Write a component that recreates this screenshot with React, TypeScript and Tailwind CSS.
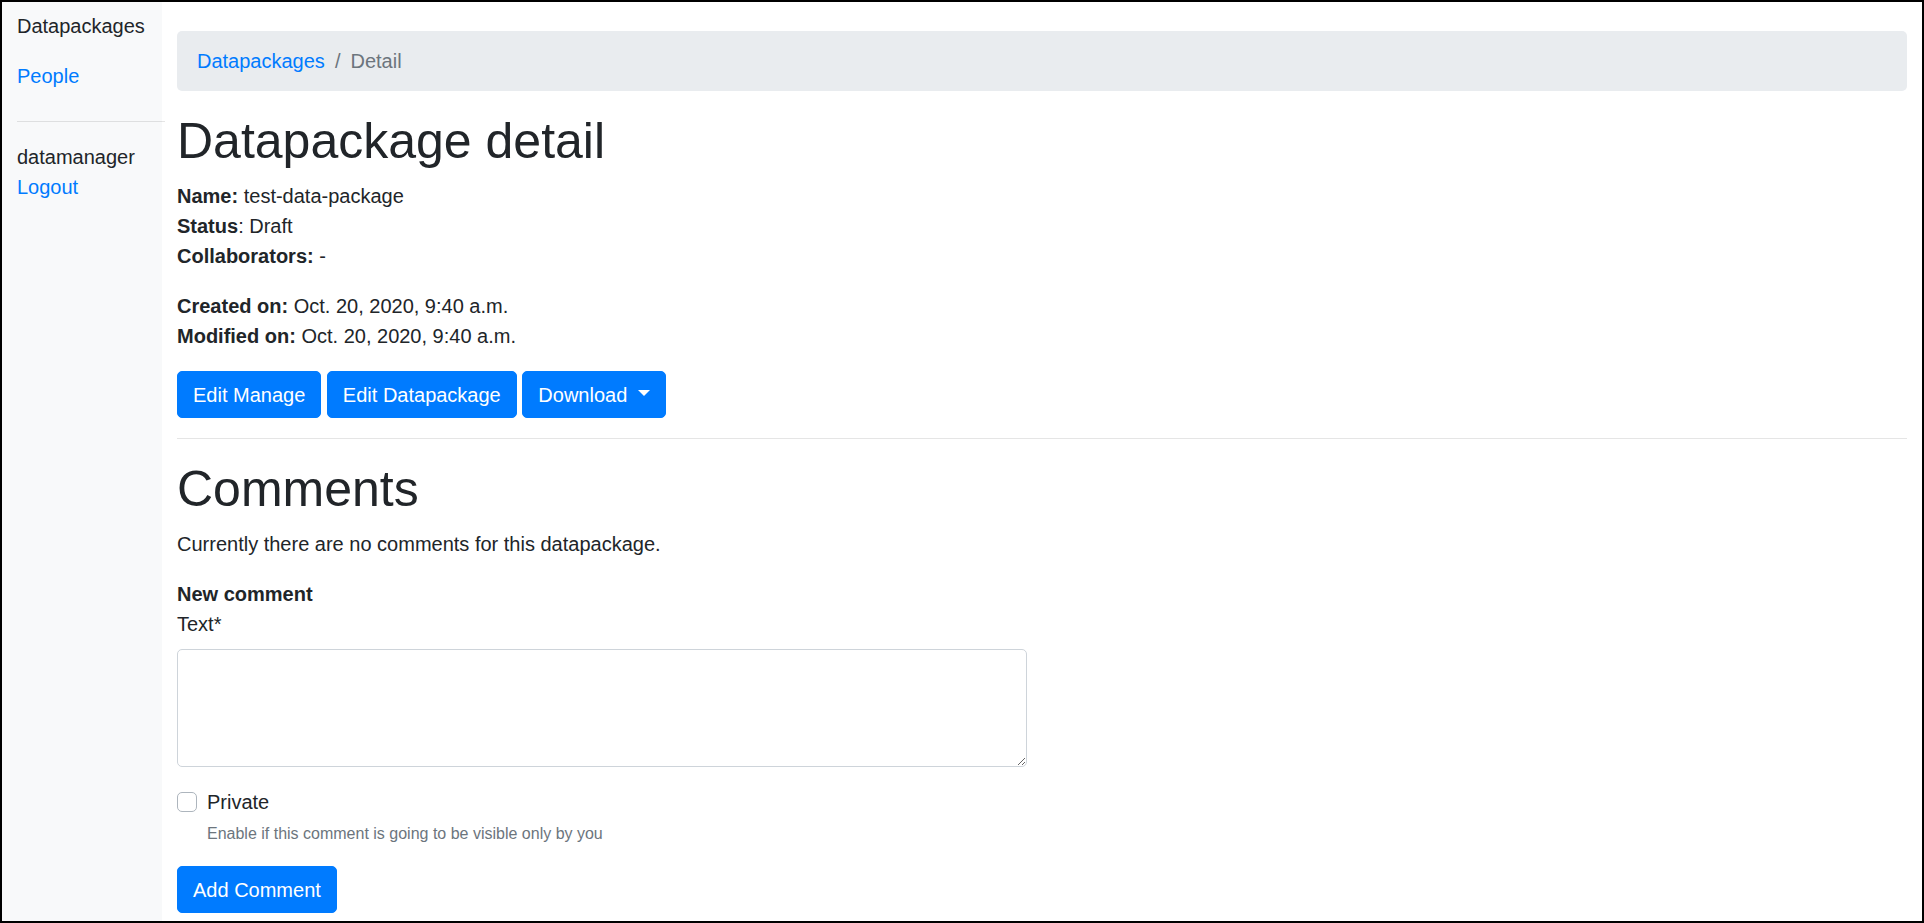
export default function App() {
  return (
    <div className="flex h-[923px] w-[1924px] overflow-hidden border-2 border-black bg-white text-[20px] leading-[30px] text-[#212529] font-['Liberation_Sans',Arial,sans-serif]">
      <aside className="w-[160px] shrink-0 bg-[#f8f9fa] pl-[15px]">
        <a className="block pt-[9px] pb-[10px] text-[#212529]">Datapackages</a>
        <a className="block pt-[10px] pb-[11px] text-[#007bff]">People</a>
        <hr className="mt-[19px] mb-[20px] w-[148px] border-0 border-t border-t-[rgba(0,0,0,0.1)]" />
        <div>datamanager</div>
        <a className="block text-[#007bff]">Logout</a>
      </aside>
      <main className="flex-1 px-[15px] pt-[29px]">
        <nav className="mb-[20px] flex rounded-[5px] bg-[#e9ecef] px-[20px] py-[15px]">
          <a className="text-[#007bff]">Datapackages</a>
          <span className="px-[10px] text-[#6c757d]">/</span>
          <span className="text-[#6c757d]">Detail</span>
        </nav>
        <h1 className="mb-[10px] text-[50px] leading-[60px] font-normal">Datapackage detail</h1>
        <p className="mb-[20px]">
          <b>Name:</b> test-data-package
          <br />
          <b>Status</b>: Draft
          <br />
          <b>Collaborators:</b> -
        </p>
        <p className="mb-[20px]">
          <b>Created on:</b> Oct. 20, 2020, 9:40 a.m.
          <br />
          <b>Modified on:</b> Oct. 20, 2020, 9:40 a.m.
        </p>
        <div>
          <button className="inline-block rounded-[5px] border border-[#007bff] bg-[#007bff] px-[15px] py-[7.5px] text-white">Edit Manage</button>{" "}
          <button className="inline-block rounded-[5px] border border-[#007bff] bg-[#007bff] px-[15px] py-[7.5px] text-white">Edit Datapackage</button>{" "}
          <button className="inline-block rounded-[5px] border border-[#007bff] bg-[#007bff] px-[15px] py-[7.5px] text-white">
            Download{" "}
            <span className="ml-[5px] inline-block h-0 w-0 border-x-[6px] border-t-[6px] border-b-0 border-x-transparent border-t-white align-[0.255em]" />
          </button>
        </div>
        <hr className="my-[20px] border-0 border-t border-t-[rgba(0,0,0,0.1)]" />
        <h1 className="mb-[10px] text-[50px] leading-[60px] font-normal">Comments</h1>
        <p className="mb-[20px]">Currently there are no comments for this datapackage.</p>
        <div>
          <b>New comment</b>
        </div>
        <label className="mb-[10px] inline-block">Text*</label>
        <textarea className="mb-[20px] block h-[118px] w-[850px] rounded-[5px] border border-[#ced4da] bg-white px-[15px] py-[7.5px]" />
        <div className="relative mb-[20px] pl-[30px]">
          <span className="absolute left-0 top-[5px] h-[20px] w-[20px] rounded-[5px] border border-[#adb5bd] bg-white" />
          <label className="block">Private</label>
          <small className="mt-[5px] block text-[16px] leading-[24px] text-[#6c757d]">Enable if this comment is going to be visible only by you</small>
        </div>
        <button className="inline-block rounded-[5px] border border-[#007bff] bg-[#007bff] px-[15px] py-[7.5px] text-white">Add Comment</button>
      </main>
    </div>
  );
}
